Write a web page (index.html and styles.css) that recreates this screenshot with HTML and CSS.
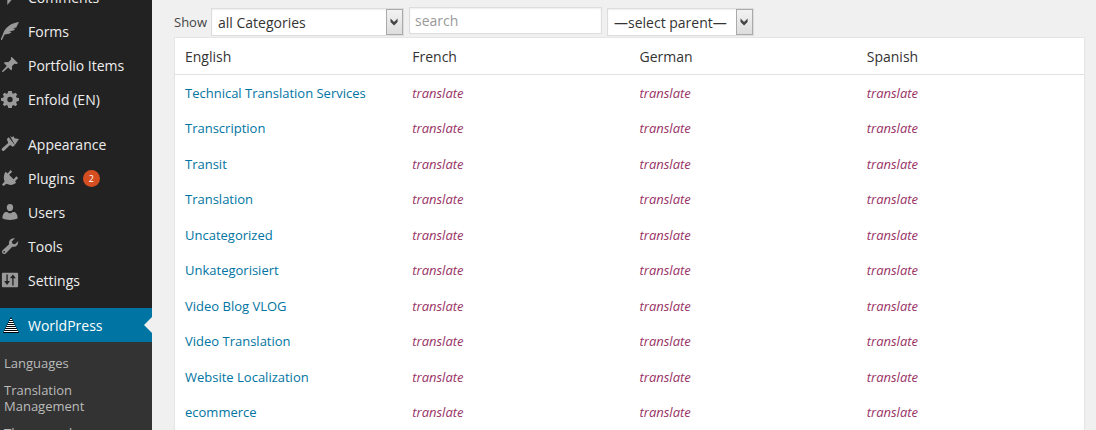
FILE: index.html
```html
<!DOCTYPE html>
<html lang="en">
<head>
    <meta charset="UTF-8">
    <meta name="viewport" content="width=device-width, initial-scale=1.0">
    <title>Taxonomy Translation</title>
    <link rel="stylesheet" href="styles.css">
</head>
<body>
    <nav class="sidebar">
        <ul class="menu">
            <li><a href="#"><svg class="icon" viewBox="0 0 20 20"><path d="M7 4h11v9h-6l-5 6z"/></svg>Comments</a></li>
            <li><a href="#"><svg class="icon" viewBox="0 0 20 20"><path d="M20 0C12 1 6 5 3 11 2 14 1 17-1 20l2 0 3-6 5-1 3-2-3-.5 5-1 2-2-3-.5 4-1 1-2-3 .3L18 4z"/></svg>Forms</a></li>
            <li><a href="#"><svg class="icon" viewBox="0 0 20 20"><path d="M12 1l7 7-2 1-2-.5-3 3c.8 2 .4 3.400-.7 4.500L8 12.700 2 18l-1-1 5.400-6L3 7.500C5 6.500 6.500 6.400 8 7l3.200-3-.4-2z"/></svg>Portfolio Items</a></li>
            <li><a href="#"><svg class="icon" viewBox="0 0 20 20"><path fill-rule="evenodd" d="M8 1h4l.5 2.500 1.500.7L16 3l2 2-1.300 2 .7 1.500L20 9v3l-2.500.7-.7 1.500L18 16l-2 2-2-1.200-1.500.7L12 20H8l-.5-2.500L6 16.800 4 18l-2-2 1.200-2-.7-1.500L0 12V9l2.500-.5L3.200 7 2 5l2-2 2 1.200 1.500-.7zM10 7.500a3 3 0 1 0 0 6 3 3 0 0 0 0-6z"/></svg>Enfold (EN)</a></li>
        </ul>
        <ul class="menu">
            <li><a href="#"><svg class="icon" viewBox="0 0 20 20"><path d="M10 1l2 1.500 2-1 1 2 5 1-4.500 6.500zM8.500 2.500l7 9-2.500 1.500-3-2-6.500 6.500c-1.500 1-3.500-1-2.500-2.500L8 9 6.500 4.500z"/></svg>Appearance</a></li>
            <li><a href="#"><svg class="icon" viewBox="0 0 20 20"><path d="M10.500 1l2 2L9 6.500l5 5L17 8l2 2-3.500 4L17 15c-3 3-7 3.500-11 1.500L3 19l-2-1.500L4 14C2.500 10 3 6 5 3l2.500 2z"/></svg>Plugins<span class="badge">2</span></a></li>
            <li><a href="#"><svg class="icon" viewBox="0 0 20 20"><path d="M10 1c5 0 4.500 8 0 8s-5-8 0-8zM5 10h2c1.500 2 4.500 2 6 0h2c2 1 3.500 3 3.500 7-4 2.500-13 2.500-17 0C1.500 13 3 11 5 10z"/></svg>Users</a></li>
            <li><a href="#"><svg class="icon" viewBox="0 0 20 20"><path fill-rule="evenodd" d="M15.500 1.500L12 5l.8 2.500L15.500 8 19 4.700c.5 4-2.500 7-6.500 6L5 18.500c-2 1.500-5-1-3.500-3.500L9 8c-1-4 2.500-7.500 6.500-6.500zM3.500 15.500a1 1 0 1 0 0 2 1 1 0 0 0 0-2z"/></svg>Tools</a></li>
            <li><a href="#"><svg class="icon" viewBox="0 0 20 20"><path fill-rule="evenodd" d="M2 2h16q1 0 1 1v14q0 1-1 1H2q-1 0-1-1V3q0-1 1-1zm4 2v7H3.500l3.200 4.500L10 11H7.500V4zm7.200 0L10 8h2.500v8H14V8h2.500z"/></svg>Settings</a></li>
        </ul>
        <ul class="menu current">
            <li><a href="#"><svg class="icon logo" viewBox="0 0 16 16"><path fill="#000" d="M8 0l8 16H0z"/><path stroke="#fff" d="M7 2.500h2M6 4.500h4M5 6.500h6M4 8.500h8M3 10.500h10M2 12.500h12M1 14.500h14"/></svg>WorldPress</a></li>
        </ul>
        <ul class="submenu">
            <li><a href="#">Languages</a></li>
            <li><a href="#">Translation Management</a></li>
            <li><a href="#">Theme and plugins localization</a></li>
        </ul>
    </nav>

    <main class="content">
        <form class="filters">
            <label for="taxonomy">Show</label>
            <span class="select-box taxonomy">
                <select id="taxonomy"><option>all Categories</option></select>
                <svg class="arrow" viewBox="0 0 17 26"><path d="M4 9l4 4 4-4v4l-4 4-4-4z"/></svg>
            </span>
            <input class="search" type="text" placeholder="search" aria-label="search">
            <span class="select-box parent">
                <select aria-label="parent"><option>—select parent—</option></select>
                <svg class="arrow" viewBox="0 0 17 26"><path d="M4 9l4 4 4-4v4l-4 4-4-4z"/></svg>
            </span>
        </form>

        <table class="terms">
            <thead>
                <tr><th>English</th><th>French</th><th>German</th><th>Spanish</th></tr>
            </thead>
            <tbody>
                <tr><td><a href="#">Technical Translation Services</a></td><td><a href="#">translate</a></td><td><a href="#">translate</a></td><td><a href="#">translate</a></td></tr>
                <tr><td><a href="#">Transcription</a></td><td><a href="#">translate</a></td><td><a href="#">translate</a></td><td><a href="#">translate</a></td></tr>
                <tr><td><a href="#">Transit</a></td><td><a href="#">translate</a></td><td><a href="#">translate</a></td><td><a href="#">translate</a></td></tr>
                <tr><td><a href="#">Translation</a></td><td><a href="#">translate</a></td><td><a href="#">translate</a></td><td><a href="#">translate</a></td></tr>
                <tr><td><a href="#">Uncategorized</a></td><td><a href="#">translate</a></td><td><a href="#">translate</a></td><td><a href="#">translate</a></td></tr>
                <tr><td><a href="#">Unkategorisiert</a></td><td><a href="#">translate</a></td><td><a href="#">translate</a></td><td><a href="#">translate</a></td></tr>
                <tr><td><a href="#">Video Blog VLOG</a></td><td><a href="#">translate</a></td><td><a href="#">translate</a></td><td><a href="#">translate</a></td></tr>
                <tr><td><a href="#">Video Translation</a></td><td><a href="#">translate</a></td><td><a href="#">translate</a></td><td><a href="#">translate</a></td></tr>
                <tr><td><a href="#">Website Localization</a></td><td><a href="#">translate</a></td><td><a href="#">translate</a></td><td><a href="#">translate</a></td></tr>
                <tr><td><a href="#">ecommerce</a></td><td><a href="#">translate</a></td><td><a href="#">translate</a></td><td><a href="#">translate</a></td></tr>
            </tbody>
        </table>
    </main>
</body>
</html>
```
FILE: styles.css
```css
* {
    box-sizing: border-box;
}
body {
    margin: 0;
    height: 100vh;
    overflow: hidden;
    display: flex;
    background: #f0f0f0;
    font-family: "Open Sans", sans-serif;
    font-size: 13px;
    color: #444;
}
a {
    text-decoration: none;
}

/* admin menu */
.sidebar {
    flex: 0 0 152px;
    background: #222;
    margin-top: -20px;
}
.menu,
.submenu {
    list-style: none;
    margin: 0;
    padding: 0;
}
.menu {
    margin-bottom: 11px;
}
.menu a {
    display: flex;
    align-items: center;
    height: 34px;
    padding-left: 1px;
    color: #eee;
    font-size: 14px;
}
.icon {
    width: 18px;
    height: 18px;
    margin-right: 9px;
    fill: #999;
}
.logo {
    width: 16px;
    height: 16px;
    margin: 0 9px 0 2px;
}
.badge {
    width: 17px;
    height: 17px;
    margin-left: 8px;
    border-radius: 50%;
    background: #d54e21;
    color: #fff;
    font-size: 9px;
    line-height: 17px;
    text-align: center;
}
.current {
    margin: 0;
}
.current a {
    position: relative;
    background: #0074a2;
    color: #fff;
}
.current a::after {
    content: "";
    position: absolute;
    right: 0;
    top: 9px;
    border: 8px solid transparent;
    border-left-width: 0;
    border-right-color: #f0f0f0;
}
.submenu {
    background: #333;
    padding: 7px 0 8px;
}
.submenu a {
    display: block;
    padding: 6px 40px 5px 4px;
    line-height: 16px;
    color: #bbb;
}

/* filters */
.content {
    flex: 1;
    padding: 7px 11px 0 22px;
}
.filters {
    display: flex;
    align-items: flex-start;
    height: 30px;
}
.filters label {
    width: 37px;
    line-height: 30px;
}
.select-box {
    position: relative;
    height: 28px;
    margin-top: 1px;
}
.select-box select {
    appearance: none;
    width: 100%;
    height: 28px;
    padding: 0 20px 0 6px;
    border: 1px solid #ddd;
    border-radius: 0;
    background: #fff;
    box-shadow: inset 0 1px 2px rgba(0, 0, 0, 0.07);
    font-family: inherit;
    font-size: 14px;
    color: #333;
}
.taxonomy {
    width: 193px;
}
.parent {
    width: 147px;
}
.arrow {
    position: absolute;
    top: 1px;
    right: 1px;
    width: 17px;
    height: 26px;
    border: 1px solid #aaa;
    background: linear-gradient(#f2f2f2, #ddd);
    fill: #444;
    pointer-events: none;
}
.search {
    width: 193px;
    height: 27px;
    margin: 0 5px;
    padding: 0 5px;
    border: 1px solid #ddd;
    background: #fff;
    box-shadow: inset 0 1px 2px rgba(0, 0, 0, 0.07);
    font-family: inherit;
    font-size: 14px;
}
.search::placeholder {
    color: #999;
}

/* terms */
.terms {
    width: 100%;
    table-layout: fixed;
    border-collapse: separate;
    border-spacing: 0;
    border: 1px solid #e5e5e5;
    border-bottom: 0;
    background: #fff;
    box-shadow: 0 1px 1px rgba(0, 0, 0, 0.04);
}
.terms th {
    padding: 9px 10px 7px;
    border-bottom: 1px solid #e1e1e1;
    color: #333;
    font-size: 14px;
    font-weight: 400;
    line-height: 20px;
    text-align: left;
}
.terms td {
    padding: 8px 10px;
    line-height: 20px;
}
.terms tbody tr:nth-child(odd) td {
    padding-bottom: 7px;
}
.terms td a {
    color: #0074a2;
}
.terms td + td a {
    color: #993366;
    font-style: italic;
}
```
